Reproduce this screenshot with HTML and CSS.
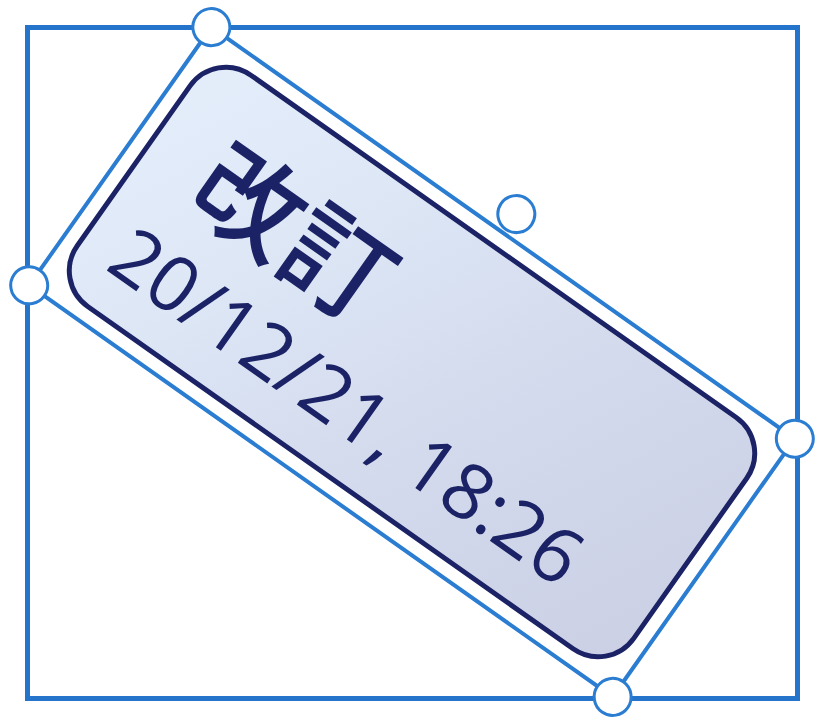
FILE: index.html
```html
<!DOCTYPE html>
<html lang="ja">
<head>
<meta charset="utf-8">
<title>Stamp</title>
<link rel="stylesheet" href="styles.css">
</head>
<body>
<div class="stage">
  <div class="frame"></div>
  <div class="selection">
    <div class="stamp">
      <div class="stamp-title">改訂</div>
      <div class="stamp-date">20/12/21, 18:26</div>
    </div>
    <span class="handle handle-tl"></span>
    <span class="handle handle-tr"></span>
    <span class="handle handle-bl"></span>
    <span class="handle handle-br"></span>
    <span class="handle handle-rot"></span>
  </div>
</div>
</body>
</html>
```
FILE: styles.css
```css
html, body {
  margin: 0;
  padding: 0;
  background: #ffffff;
}

.stage {
  position: relative;
  width: 827px;
  height: 727px;
  overflow: hidden;
  padding-top: 25px;
  padding-left: 25px;
  box-sizing: border-box;
}

.frame {
  width: 775px;
  height: 676px;
  box-sizing: border-box;
  border: 5px solid #2574cb;
}

.selection {
  position: absolute;
  left: 52.5px;
  top: 201.5px;
  width: 718px;
  height: 320px;
  box-sizing: border-box;
  border: 4px solid #2b7dd2;
  padding: 12px;
  transform: rotate(35.2deg);
  transform-origin: 50% 50%;
  display: flex;
}

.stamp {
  flex: 1;
  border: 5px solid #1b2366;
  border-radius: 46px;
  background: linear-gradient(117deg, #e4eefb 0%, #dce6f5 30%, #d5dcee 55%, #cbd0e5 100%);
  padding: 40px 20px 0 32px;
  display: flex;
  flex-direction: column;
  align-items: flex-start;
  color: #1b2366;
}

.stamp-title {
  margin-left: 27px;
  font-family: "Noto Sans CJK JP", "Noto Sans", sans-serif;
  font-weight: 500;
  font-size: 108px;
  line-height: 108px;
  height: 108px;
}

.stamp-date {
  margin-top: 24px;
  font-family: "Open Sans", "Noto Sans", sans-serif;
  font-weight: 400;
  font-size: 77px;
  line-height: 1;
  white-space: nowrap;
}

.handle {
  position: absolute;
  width: 40px;
  height: 40px;
  box-sizing: border-box;
  border: 3px solid #2b7dd2;
  border-radius: 50%;
  background: #ffffff;
}

.handle-tl { left: -22px; top: -22px; }
.handle-tr { right: -22px; top: -22px; }
.handle-bl { left: -22px; bottom: -22px; }
.handle-br { right: -22px; bottom: -22px; }
.handle-rot { left: 335px; top: -45px; background: transparent; }
```
